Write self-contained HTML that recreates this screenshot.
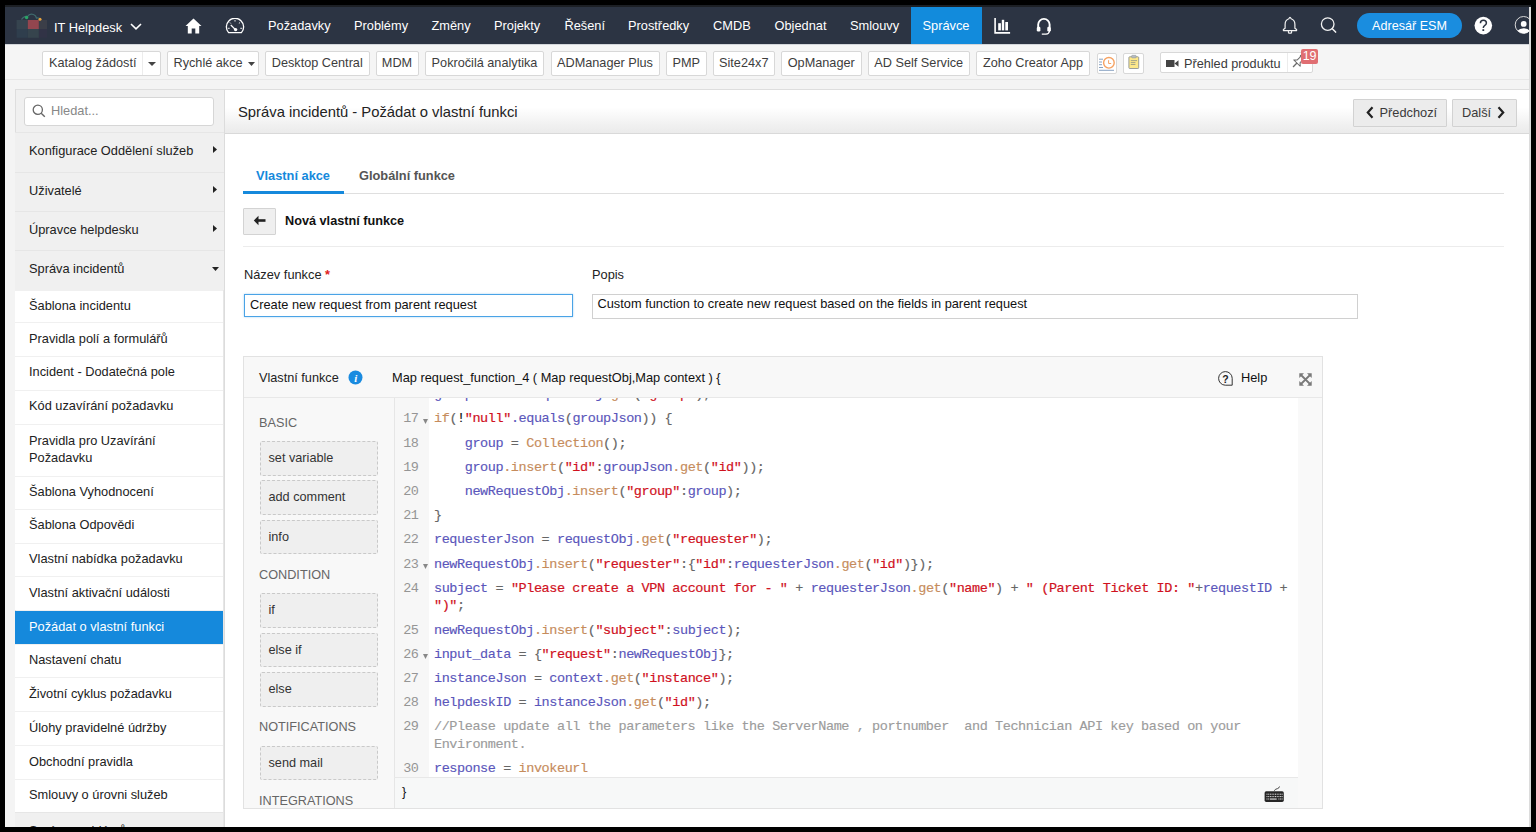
<!DOCTYPE html>
<html><head><meta charset="utf-8">
<style>
*{box-sizing:border-box;margin:0;padding:0}
html,body{width:1536px;height:832px;overflow:hidden;background:#000;font-family:"Liberation Sans",sans-serif;color:#222}
.a{position:absolute;white-space:nowrap}
#frame{position:absolute;left:5px;top:5px;width:1526px;height:822px;background:#f4f4f4;overflow:hidden}
.nv{position:absolute;top:7px;height:37px;line-height:37px;color:#fff;font-size:12.8px;white-space:nowrap}
.tb{position:absolute;top:51px;height:25px;background:#fff;border:1px solid #d8d8d8;border-radius:2px;font-size:12.7px;color:#3d3d3d;line-height:23px;padding:0 6px;white-space:nowrap}
.sr{position:absolute;left:15px;width:209px;font-size:12.8px;color:#222;white-space:nowrap}
.sm{background:#f0f0f0;border-top:1px solid #e6e6e6;padding-left:14px}
.ss{background:#fff;border-top:1px solid #f0f0f0;padding-left:14px}
.code{font-family:"Liberation Mono",monospace;font-size:12.8px}
</style></head><body>
<div id="frame"></div>
<!-- top strip -->
<div class="a" style="left:5px;top:5px;width:1526px;height:2px;background:#1c1f24"></div>
<!-- NAV -->
<div class="a" style="left:5px;top:7px;width:1526px;height:37px;background:#2c3443"></div>
<!-- logo -->
<svg class="a" style="left:16px;top:13px" width="32" height="26" viewBox="0 0 32 26">
 <rect x="0.6" y="7" width="11.2" height="9" fill="#36444f"/>
 <rect x="11.8" y="7" width="11.1" height="9" fill="#93464f"/>
 <rect x="22.9" y="7" width="8.1" height="9" fill="#3b3e48"/>
 <rect x="0.6" y="16" width="11.2" height="8.8" fill="#2f3e4d"/>
 <rect x="11.8" y="16" width="11.1" height="8.8" fill="#36444d"/>
 <rect x="22.9" y="16" width="8.1" height="8.8" fill="#313346"/>
 <path d="M5.5 6.5 Q8 2.5 11.5 3.5 Q13.5 0.2 17.5 1.5 Q20 2.5 20.5 5 Q23 4.5 24.5 6.5" stroke="#3f6a6c" stroke-width="1.3" fill="none"/>
 <circle cx="10.6" cy="4.5" r="1.7" fill="#2aa566"/>
 <circle cx="24" cy="6.2" r="1.5" fill="#e7a23f"/>
</svg>
<div class="nv" style="left:54px;top:8.5px">IT Helpdesk</div>
<svg class="a" style="left:130px;top:23px" width="12" height="7" viewBox="0 0 12 7"><path d="M1 1 L6 5.8 L11 1" stroke="#fff" stroke-width="1.6" fill="none"/></svg>
<!-- home -->
<svg class="a" style="left:185px;top:18px" width="17" height="16" viewBox="0 0 17 16"><path d="M8.5 0.5 L16.5 8 L14.2 8 L14.2 15.5 L10.3 15.5 L10.3 10.5 L6.7 10.5 L6.7 15.5 L2.8 15.5 L2.8 8 L0.5 8 Z" fill="#fff"/></svg>
<!-- dashboard -->
<svg class="a" style="left:225px;top:18px" width="20" height="16" viewBox="0 0 20 16"><path d="M3.6 14.6 A8.6 8.6 0 1 1 16.4 14.6 Z" stroke="#fff" stroke-width="1.3" fill="none" stroke-linejoin="round"/><path d="M5.8 7 L10.4 11.6" stroke="#fff" stroke-width="1.2"/><circle cx="10.6" cy="11.6" r="1.7" fill="#fff"/><path d="M10 2 v1.6 M3 10.3 h1.7 M15.3 10.3 h1.7 M4.9 4.5 l0.9 1 M15 4.6 l-1.1 0.7" stroke="#fff" stroke-width="0.9"/></svg>
<div class="nv" style="left:268px">Požadavky</div>
<div class="nv" style="left:354px">Problémy</div>
<div class="nv" style="left:431.5px">Změny</div>
<div class="nv" style="left:494px">Projekty</div>
<div class="nv" style="left:564.5px">Řešení</div>
<div class="nv" style="left:628px">Prostředky</div>
<div class="nv" style="left:713px">CMDB</div>
<div class="nv" style="left:774.5px">Objednat</div>
<div class="nv" style="left:850px">Smlouvy</div>
<div class="a" style="left:911px;top:7px;width:71px;height:37px;background:#128bdc"></div>
<div class="nv" style="left:922.5px">Správce</div>
<!-- bar chart -->
<svg class="a" style="left:992px;top:16px" width="20" height="20" viewBox="992 16 20 20"><path d="M995.1 18 V32.9 H1010.1" stroke="#fff" stroke-width="1.6" fill="none"/><rect x="998.2" y="23.2" width="2.7" height="7.2" fill="#fff"/><rect x="1001.8" y="19.8" width="2.4" height="10.6" fill="#fff"/><rect x="1005.3" y="22" width="2.7" height="8.4" fill="#fff"/></svg>
<!-- headset -->
<svg class="a" style="left:1034px;top:15px" width="20" height="22" viewBox="1034 15 20 22"><path d="M1038.2 27 V24.6 A5.7 5.7 0 0 1 1049.6 24.6 V27" stroke="#fff" stroke-width="1.9" fill="none"/><rect x="1036.8" y="26.8" width="3.6" height="4.8" rx="1.3" fill="#fff"/><rect x="1047.3" y="26.8" width="3.6" height="4.8" rx="1.3" fill="#fff"/><path d="M1049.5 31 Q1049 34 1046 34.2 H1041.8" stroke="#fff" stroke-width="1.3" fill="none"/></svg>
<!-- bell -->
<svg class="a" style="left:1280px;top:14px" width="20" height="21" viewBox="1280 14 20 21"><path d="M1288.9 18.7 Q1290 16.2 1291.1 18.7 C1293.9 19.6 1294.9 21.8 1294.9 24.4 V28.2 L1296.6 29.4 V30.6 H1283.4 V29.4 L1285.1 28.2 V24.4 C1285.1 21.8 1286.1 19.6 1288.9 18.7 Z" stroke="#f2f2f2" stroke-width="1.2" fill="none" stroke-linejoin="round"/><path d="M1288.4 30.8 V32.4 Q1288.4 33.1 1289.2 33.1 H1290.8 Q1291.6 33.1 1291.6 32.4 V30.8" stroke="#f2f2f2" stroke-width="1.1" fill="none"/></svg>
<!-- search -->
<svg class="a" style="left:1318px;top:14px" width="22" height="22" viewBox="1318 14 22 22"><circle cx="1327.7" cy="24.1" r="6.3" stroke="#f2f2f2" stroke-width="1.3" fill="none"/><path d="M1332.3 28.7 L1335.6 32.1" stroke="#f2f2f2" stroke-width="1.5" stroke-linecap="round"/></svg>
<div class="a" style="left:1357px;top:13px;width:105px;height:25px;border-radius:13px;background:#1a8ddf"></div>
<div class="a" style="left:1357px;top:13px;width:105px;height:25px;line-height:26.5px;text-align:center;color:#fff;font-size:12.6px">Adresář ESM</div>
<svg class="a" style="left:1474px;top:15.5px" width="19" height="19" viewBox="0 0 19 19"><circle cx="9.3" cy="9.6" r="8.8" fill="#fff"/><path d="M6.4 7.2 Q6.4 4.2 9.4 4.2 Q12.4 4.2 12.4 7 Q12.4 8.6 10.6 9.6 Q9.3 10.4 9.3 12" stroke="#2c3443" stroke-width="1.5" fill="none"/><rect x="8.4" y="13.2" width="1.8" height="1.8" fill="#2c3443"/></svg>
<svg class="a" style="left:1514px;top:15px" width="18" height="20" viewBox="1514 15 18 20"><circle cx="1523.6" cy="24.9" r="8.4" stroke="#d8d8d8" stroke-width="1" fill="none"/><circle cx="1523.7" cy="23.9" r="2.9" fill="#fff"/><path d="M1517.6 30.8 Q1519.5 28.3 1523.7 28.3 Q1527.9 28.3 1529.8 30.8 A8.4 8.4 0 0 1 1517.6 30.8 Z" fill="#fff"/></svg>
<!-- TOOLBAR -->
<div class="a" style="left:5px;top:44px;width:1524px;height:1px;background:#d3d6da;z-index:1"></div>
<div class="a" style="left:5px;top:44px;width:1524px;height:36px;background:#f5f5f5;border-bottom:1px solid #e7e7e7"></div>
<div class="tb" style="left:42px;width:119px;padding:0 0 0 6px">Katalog žádostí<span style="position:absolute;left:99px;top:0;width:1px;height:23px;background:#ececec"></span><svg style="position:absolute;left:105px;top:10px" width="8" height="4" viewBox="0 0 8 4"><path d="M0 0 H8 L4 4Z" fill="#444"/></svg></div>
<div class="tb" style="left:166.5px;width:92.5px;padding:0 0 0 6px">Rychlé akce<svg style="position:absolute;left:80px;top:10px" width="7" height="4" viewBox="0 0 7 4"><path d="M0 0 H7 L3.5 4Z" fill="#444"/></svg></div>
<div class="tb" style="left:265px;width:104.5px;text-align:center;padding:0">Desktop Central</div>
<div class="tb" style="left:375.5px;width:43.0px;text-align:center;padding:0">MDM</div>
<div class="tb" style="left:425px;width:119px;text-align:center;padding:0">Pokročilá analytika</div>
<div class="tb" style="left:550.5px;width:109.0px;text-align:center;padding:0">ADManager Plus</div>
<div class="tb" style="left:666px;width:40.5px;text-align:center;padding:0">PMP</div>
<div class="tb" style="left:712.5px;width:62.5px;text-align:center;padding:0">Site24x7</div>
<div class="tb" style="left:781px;width:80.5px;text-align:center;padding:0">OpManager</div>
<div class="tb" style="left:867.5px;width:102.5px;text-align:center;padding:0">AD Self Service</div>
<div class="tb" style="left:976px;width:114px;text-align:center;padding:0">Zoho Creator App</div>
<div class="tb" style="left:1096.5px;top:53px;width:20.5px;height:21px;padding:0"></div>
<svg class="a" style="left:1096px;top:53px" width="22" height="22" viewBox="1096 53 22 22"><path d="M1099 59.2 H1103 M1099 62 H1102 M1099 64.7 H1102 M1099 67.5 H1103 M1099 70.3 H1114" stroke="#88a2c2" stroke-width="1"/><circle cx="1108.9" cy="62.8" r="5.3" stroke="#f6a262" stroke-width="1.4" fill="#fff"/><path d="M1108.6 60.2 V63.5 H1111.2" stroke="#f6a262" stroke-width="1" fill="none"/></svg>
<div class="tb" style="left:1123px;top:53px;width:21px;height:21px;padding:0"></div>
<svg class="a" style="left:1123px;top:53px" width="21" height="21" viewBox="1123 53 21 21"><rect x="1128.9" y="56.8" width="9.8" height="11.7" rx="0.8" fill="#fde88a" stroke="#8e9494" stroke-width="0.9"/><rect x="1131.6" y="55.3" width="4.6" height="2.6" rx="0.8" fill="#b8bcc0" stroke="#8e9494" stroke-width="0.5"/><path d="M1130.8 60.6 H1137 M1130.8 62.6 H1135.4 M1130.8 64.5 H1135.4" stroke="#8e9488" stroke-width="0.8"/></svg>
<div class="tb" style="left:1159.5px;top:52px;width:153px;height:21px;line-height:22.5px;padding:0 0 0 23.5px;font-size:12.7px;color:#3a3a3a">Přehled produktu<svg style="position:absolute;left:5px;top:7px" width="13" height="7" viewBox="0 0 13 7"><rect x="0" y="0" width="8.5" height="7" fill="#444"/><path d="M8.5 3.5 L12.5 0.3 V6.7Z" fill="#444"/></svg><span style="position:absolute;left:126.5px;top:0;width:1px;height:19px;background:#ececec"></span></div>
<svg class="a" style="left:1290px;top:54px" width="16" height="17" viewBox="0 0 16 17"><g transform="rotate(45 8 8)"><path d="M5 1.5 H11 L10 3 V7 L12.5 9.5 H3.5 L6 7 V3 Z" stroke="#6a6a6a" stroke-width="1" fill="#fff" stroke-linejoin="round"/><path d="M8 9.5 V15" stroke="#6a6a6a" stroke-width="1.3"/></g></svg>
<div class="a" style="left:1301px;top:48.5px;width:17px;height:15.5px;background:#e06e72;border-radius:2px;color:#fff;font-family:'Liberation Sans',sans-serif;font-size:12.5px;line-height:15.5px;text-align:center;letter-spacing:-0.3px">19</div>
<!-- SIDEBAR -->
<div class="a" style="left:15px;top:89px;width:209px;height:738px;background:#f0f0f0;border-left:1px solid #dedede;border-top:1px solid #dedede"></div>
<div class="a" style="left:24px;top:97px;width:189.5px;height:28.5px;background:#fff;border:1px solid #d6d6d6;border-radius:3px"></div>
<svg class="a" style="left:32px;top:104px" width="14" height="14" viewBox="0 0 14 14"><circle cx="5.8" cy="5.8" r="4.6" stroke="#666" stroke-width="1.3" fill="none"/><path d="M9.2 9.2 L12.8 12.8" stroke="#666" stroke-width="1.4"/></svg>
<div class="a" style="left:51px;top:97px;height:28.5px;line-height:28.5px;font-size:12.8px;color:#888">Hledat...</div>
<div class="sr sm" style="top:132px;height:40px;line-height:36.0px">Konfigurace Oddělení služeb</div>
<svg class="a" style="left:213px;top:146.25px" width="4" height="7" viewBox="0 0 4 7"><path d="M0 0 L4 3.5 L0 7Z" fill="#222"/></svg>
<div class="sr sm" style="top:172px;height:39px;line-height:35.8px">Uživatelé</div>
<svg class="a" style="left:213px;top:185.65px" width="4" height="7" viewBox="0 0 4 7"><path d="M0 0 L4 3.5 L0 7Z" fill="#222"/></svg>
<div class="sr sm" style="top:211px;height:39px;line-height:35.9px">Úpravce helpdesku</div>
<svg class="a" style="left:213px;top:225.0px" width="4" height="7" viewBox="0 0 4 7"><path d="M0 0 L4 3.5 L0 7Z" fill="#222"/></svg>
<div class="sr sm" style="top:250px;height:40px;line-height:36.3px">Správa incidentů</div>
<svg class="a" style="left:212px;top:266.6px" width="7" height="4" viewBox="0 0 7 4"><path d="M0 0 H7 L3.5 4Z" fill="#222"/></svg>
<div class="sr ss" style="top:290px;height:32px;line-height:29.4px">Šablona incidentu</div>
<div class="sr ss" style="top:322px;height:34px;line-height:31.1px">Pravidla polí a formulářů</div>
<div class="sr ss" style="top:356px;height:34px;line-height:30.5px">Incident - Dodatečná pole</div>
<div class="sr ss" style="top:390px;height:34px;line-height:30.6px">Kód uzavírání požadavku</div>
<div class="sr ss" style="top:424px;height:52px;line-height:17.5px;padding-top:6.5px;white-space:normal">Pravidla pro Uzavírání<br>Požadavku</div>
<div class="sr ss" style="top:476px;height:33px;line-height:30.8px">Šablona Vyhodnocení</div>
<div class="sr ss" style="top:509px;height:34px;line-height:30.7px">Šablona Odpovědi</div>
<div class="sr ss" style="top:543px;height:33px;line-height:30.5px">Vlastní nabídka požadavku</div>
<div class="sr ss" style="top:576px;height:34px;line-height:31.0px">Vlastní aktivační události</div>
<div class="sr ss" style="top:611px;height:33px;line-height:32px;background:#1589dc;color:#fff;border-top:none">Požádat o vlastní funkci</div>
<div class="sr ss" style="top:644px;height:33px;line-height:30.5px">Nastavení chatu</div>
<div class="sr ss" style="top:677px;height:34px;line-height:31.0px">Životní cyklus požadavku</div>
<div class="sr ss" style="top:711px;height:34px;line-height:31.0px">Úlohy pravidelné údržby</div>
<div class="sr ss" style="top:745px;height:34px;line-height:31.0px">Obchodní pravidla</div>
<div class="sr ss" style="top:779px;height:33px;line-height:30.5px">Smlouvy o úrovni služeb</div>
<div class="sr sm" style="top:812px;height:30px;line-height:36px;color:#222">Správa problémů</div>
<div class="a" style="left:223px;top:290px;width:1px;height:537px;background:#e6e6e6"></div>
<!-- MAIN -->
<div class="a" style="left:224px;top:89px;width:1306px;height:738px;background:#fff;border-left:1px solid #dcdcdc;border-top:1px solid #dedede"></div>
<div class="a" style="left:225px;top:90px;width:1304px;height:43.5px;background:linear-gradient(#fff 0%,#fff 40%,#f9f9f9 58%,#f1f1f1 80%,#ebebeb 100%);border-bottom:1px solid #d9d9d9"></div>
<div class="a" style="left:238px;top:91px;height:43px;line-height:43px;font-size:14.8px;color:#222">Správa incidentů - Požádat o vlastní funkci</div>
<div class="a" style="left:1353px;top:99px;width:94px;height:27.5px;background:#ececec;border:1px solid #d2d2d2;border-radius:1px;font-size:12.8px;line-height:26px;color:#3a3a3a;padding-left:25.5px">Předchozí</div>
<svg class="a" style="left:1366px;top:106px" width="8" height="13" viewBox="0 0 8 13"><path d="M6.5 1.2 L1.8 6.5 L6.5 11.8" stroke="#222" stroke-width="2.2" fill="none"/></svg>
<div class="a" style="left:1452px;top:99px;width:65px;height:27.5px;background:#ececec;border:1px solid #d2d2d2;border-radius:1px;font-size:12.8px;line-height:26px;color:#3a3a3a;padding-left:9px">Další</div>
<svg class="a" style="left:1497px;top:106px" width="8" height="13" viewBox="0 0 8 13"><path d="M1.5 1.2 L6.2 6.5 L1.5 11.8" stroke="#222" stroke-width="2.2" fill="none"/></svg>
<!-- tabs -->
<div class="a" style="left:243px;top:193px;width:1261px;height:1px;background:#dfdfdf"></div>
<div class="a" style="left:243px;top:191px;width:101px;height:3px;background:#1589dc"></div>
<div class="a" style="left:256px;top:165px;line-height:21px;font-size:12.8px;font-weight:bold;color:#1589dc">Vlastní akce</div>
<div class="a" style="left:359px;top:165px;line-height:21px;font-size:12.8px;font-weight:bold;color:#555">Globální funkce</div>
<div class="a" style="left:243px;top:207.5px;width:32.5px;height:27px;background:#efefef;border:1px solid #d3d3d3;border-radius:1px"></div>
<svg class="a" style="left:253px;top:215px" width="13" height="11" viewBox="0 0 13 11"><path d="M5.5 0.8 L0.8 5.5 L5.5 10.2 Z" fill="#222"/><rect x="4.5" y="4.2" width="8" height="2.6" fill="#222"/></svg>
<div class="a" style="left:285px;top:211px;line-height:21px;font-size:12.7px;font-weight:bold;color:#111">Nová vlastní funkce</div>
<div class="a" style="left:243px;top:246px;width:1261px;height:1px;background:#ececec"></div>
<!-- form -->
<div class="a" style="left:244px;top:265px;line-height:20px;font-size:12.8px;color:#222">Název funkce <span style="color:#e02020;font-weight:bold">*</span></div>
<div class="a" style="left:592px;top:265px;line-height:20px;font-size:12.8px;color:#222">Popis</div>
<div class="a" style="left:244px;top:294px;width:329px;height:23px;border:1px solid #4aa3e6;box-shadow:0 0 2px #a8d2f2;font-size:12.8px;line-height:20px;padding-left:5px;color:#111">Create new request from parent request</div>
<div class="a" style="left:592px;top:294px;width:766px;height:25px;border:1px solid #d0d0d0;font-size:12.8px;line-height:18.5px;padding-left:4.5px;color:#111">Custom function to create new request based on the fields in parent request</div>
<!-- EDITOR -->
<style>
.v{font-style:normal;color:#5a56bb}
.s{font-style:normal;color:#d0111e;-webkit-text-stroke:0.2px #d0111e}
.m{font-style:normal;color:#c68c5c}
.p{font-style:normal;color:#666}
.k{font-style:normal;color:#111}
.c{font-style:normal;color:#9c9c9c}
.ln{position:absolute;left:395px;width:23.5px;text-align:right;font-family:"Liberation Mono",monospace;font-size:13.5px;letter-spacing:-0.42px;color:#959595;line-height:17.45px;padding-top:3.4px}
.cl{position:absolute;left:434px;font-family:"Liberation Mono",monospace;font-size:13.5px;letter-spacing:-0.416px;line-height:17.45px;padding-top:3.4px;white-space:pre;color:#666;-webkit-text-stroke:0.15px}
.blk{position:absolute;left:260px;width:118px;background:#efefef;border:1px dashed #c9c9c9;border-radius:2px;font-size:12.7px;color:#333;padding-left:7.5px;white-space:nowrap}
</style>
<div class="a" style="left:243px;top:356px;width:1080px;height:453px;background:#f8f8f8;border:1px solid #e2e2e2"></div>
<div class="a" style="left:244px;top:397px;width:1078px;height:1px;background:#e8e8e8"></div>
<div class="a" style="left:259px;top:368px;line-height:20px;font-size:12.7px;color:#222">Vlastní funkce</div>
<svg class="a" style="left:347.5px;top:370px" width="15" height="15" viewBox="0 0 15 15"><circle cx="7.5" cy="7.5" r="7" fill="#1a8be0"/><text x="7.8" y="12" font-family="Liberation Serif" font-style="italic" font-weight="bold" font-size="11" fill="#fff" text-anchor="middle">i</text></svg>
<div class="a" style="left:392px;top:368px;line-height:20px;font-size:12.8px;color:#111">Map request_function_4 ( Map requestObj,Map context ) {</div>
<svg class="a" style="left:1218px;top:370.5px" width="15" height="15" viewBox="0 0 15 15"><path d="M7.3 14.2 A6.8 6.8 0 1 1 14.2 7.3 V14.2 Z" stroke="#333" stroke-width="1" fill="none"/><text x="7.5" y="12" font-family="Liberation Sans" font-weight="bold" font-size="10.5" fill="#222" text-anchor="middle">?</text></svg>
<div class="a" style="left:1241px;top:368px;line-height:20px;font-size:12.8px;color:#111">Help</div>
<svg class="a" style="left:1299px;top:372.5px" width="13" height="13" viewBox="0 0 13 13"><path d="M0.3 0.3 H5 L0.3 5Z M12.7 0.3 H8 L12.7 5Z M0.3 12.7 H5 L0.3 8Z M12.7 12.7 H8 L12.7 8Z" fill="#7a7a7a"/><path d="M1.5 1.5 L11.5 11.5 M11.5 1.5 L1.5 11.5" stroke="#7a7a7a" stroke-width="1.8"/></svg>
<!-- code area -->
<div class="a" style="left:394px;top:398px;width:904px;height:379px;background:#fff;border-left:1px solid #e6e6e6;overflow:hidden"></div>
<div class="a" style="left:395px;top:398px;width:34px;height:379px;background:#f7f7f7"></div>
<div class="a" style="left:1298px;top:398px;width:24px;height:410px;background:#f9f9f9;z-index:2"></div>
<div class="a" style="left:394px;top:398px;width:904px;height:379px;overflow:hidden">
<div style="position:absolute;left:-394px;top:-398px;width:1536px;height:832px">
<div class="ln" style="top:382.78px">16</div><div class="cl" style="top:382.78px"><i class="v">groupJson</i><i class="p"> = </i><i class="v">requestObj</i><i class="m">.get</i><i class="p">(</i><i class="s">&quot;group&quot;</i><i class="p">);</i></div>
<div class="ln" style="top:407.00px">17</div><svg class="a" style="left:423px;top:418.50px" width="5" height="5" viewBox="0 0 5 5"><path d="M0 0 H5 L2.5 5Z" fill="#888"/></svg><div class="cl" style="top:407.00px"><i class="m">if</i><i class="p">(</i><i class="k">!</i><i class="s">&quot;null&quot;</i><i class="v">.equals</i><i class="p">(</i><i class="v">groupJson</i><i class="p">)) {</i></div>
<div class="ln" style="top:431.22px">18</div><div class="cl" style="top:431.22px">    <i class="v">group</i><i class="p"> = </i><i class="m">Collection</i><i class="p">();</i></div>
<div class="ln" style="top:455.44px">19</div><div class="cl" style="top:455.44px">    <i class="v">group</i><i class="m">.insert</i><i class="p">(</i><i class="s">&quot;id&quot;</i><i class="p">:</i><i class="v">groupJson</i><i class="m">.get</i><i class="p">(</i><i class="s">&quot;id&quot;</i><i class="p">));</i></div>
<div class="ln" style="top:479.66px">20</div><div class="cl" style="top:479.66px">    <i class="v">newRequestObj</i><i class="m">.insert</i><i class="p">(</i><i class="s">&quot;group&quot;</i><i class="p">:</i><i class="v">group</i><i class="p">);</i></div>
<div class="ln" style="top:503.88px">21</div><div class="cl" style="top:503.88px"><i class="p">}</i></div>
<div class="ln" style="top:528.10px">22</div><div class="cl" style="top:528.10px"><i class="v">requesterJson</i><i class="p"> = </i><i class="v">requestObj</i><i class="m">.get</i><i class="p">(</i><i class="s">&quot;requester&quot;</i><i class="p">);</i></div>
<div class="ln" style="top:552.32px">23</div><svg class="a" style="left:423px;top:563.82px" width="5" height="5" viewBox="0 0 5 5"><path d="M0 0 H5 L2.5 5Z" fill="#888"/></svg><div class="cl" style="top:552.32px"><i class="v">newRequestObj</i><i class="m">.insert</i><i class="p">(</i><i class="s">&quot;requester&quot;</i><i class="p">:{</i><i class="s">&quot;id&quot;</i><i class="p">:</i><i class="v">requesterJson</i><i class="m">.get</i><i class="p">(</i><i class="s">&quot;id&quot;</i><i class="p">)});</i></div>
<div class="ln" style="top:576.54px">24</div><div class="cl" style="top:576.54px"><i class="v">subject</i><i class="p"> = </i><i class="s">&quot;Please create a VPN account for - &quot;</i><i class="p"> + </i><i class="v">requesterJson</i><i class="m">.get</i><i class="p">(</i><i class="s">&quot;name&quot;</i><i class="p">) + </i><i class="s">&quot; (Parent Ticket ID: &quot;</i><i class="p">+</i><i class="v">requestID</i><i class="p"> +</i><br><i class="s">&quot;)&quot;</i><i class="p">;</i></div>
<div class="ln" style="top:618.21px">25</div><div class="cl" style="top:618.21px"><i class="v">newRequestObj</i><i class="m">.insert</i><i class="p">(</i><i class="s">&quot;subject&quot;</i><i class="p">:</i><i class="v">subject</i><i class="p">);</i></div>
<div class="ln" style="top:642.43px">26</div><svg class="a" style="left:423px;top:653.93px" width="5" height="5" viewBox="0 0 5 5"><path d="M0 0 H5 L2.5 5Z" fill="#888"/></svg><div class="cl" style="top:642.43px"><i class="v">input_data</i><i class="p"> = {</i><i class="s">&quot;request&quot;</i><i class="p">:</i><i class="v">newRequestObj</i><i class="p">};</i></div>
<div class="ln" style="top:666.65px">27</div><div class="cl" style="top:666.65px"><i class="v">instanceJson</i><i class="p"> = </i><i class="v">context</i><i class="m">.get</i><i class="p">(</i><i class="s">&quot;instance&quot;</i><i class="p">);</i></div>
<div class="ln" style="top:690.87px">28</div><div class="cl" style="top:690.87px"><i class="v">helpdeskID</i><i class="p"> = </i><i class="v">instanceJson</i><i class="m">.get</i><i class="p">(</i><i class="s">&quot;id&quot;</i><i class="p">);</i></div>
<div class="ln" style="top:715.09px">29</div><div class="cl" style="top:715.09px"><i class="c">//Please update all the parameters like the ServerName , portnumber  and Technician API key based on your<br>Environment.</i></div>
<div class="ln" style="top:756.76px">30</div><div class="cl" style="top:756.76px"><i class="v">response</i><i class="p"> = </i><i class="m">invokeurl</i></div>
</div></div>
<div class="a" style="left:394px;top:777px;width:904px;height:1px;background:#e8e8e8"></div>
<div class="a" style="left:394px;top:778px;width:904px;height:30px;background:#f7f8f8;border-left:1px solid #e6e6e6"></div>
<div class="a" style="left:402px;top:782px;line-height:20px;font-size:12.8px;color:#111">}</div>
<svg class="a" style="left:1262px;top:784px" width="24" height="20" viewBox="1262 784 24 20"><path d="M1274.3 790.8 Q1275 789 1277.5 788.6 Q1279.3 788 1279.5 786.5" stroke="#333" stroke-width="0.9" fill="none"/><rect x="1264.6" y="791.3" width="19.2" height="10.6" rx="1.6" fill="#262626"/><rect x="1266.5" y="793.7" width="1" height="1" fill="#e8e8e8"/><rect x="1268.2" y="793.7" width="1" height="1" fill="#e8e8e8"/><rect x="1269.9" y="793.7" width="1" height="1" fill="#e8e8e8"/><rect x="1271.6" y="793.7" width="1" height="1" fill="#e8e8e8"/><rect x="1273.3" y="793.7" width="1" height="1" fill="#e8e8e8"/><rect x="1275" y="793.7" width="1" height="1" fill="#e8e8e8"/><rect x="1276.7" y="793.7" width="1" height="1" fill="#e8e8e8"/><rect x="1278.4" y="793.7" width="1" height="1" fill="#e8e8e8"/><rect x="1280.1" y="793.7" width="1" height="1" fill="#e8e8e8"/><rect x="1281.6" y="793.7" width="1" height="1" fill="#e8e8e8"/><rect x="1266.5" y="796.1" width="1" height="1" fill="#e8e8e8"/><rect x="1268.2" y="796.1" width="1" height="1" fill="#e8e8e8"/><rect x="1269.9" y="796.1" width="1" height="1" fill="#e8e8e8"/><rect x="1271.6" y="796.1" width="1" height="1" fill="#e8e8e8"/><rect x="1273.3" y="796.1" width="1" height="1" fill="#e8e8e8"/><rect x="1275" y="796.1" width="1" height="1" fill="#e8e8e8"/><rect x="1276.7" y="796.1" width="1" height="1" fill="#e8e8e8"/><rect x="1278.4" y="796.1" width="1" height="1" fill="#e8e8e8"/><rect x="1280.1" y="796.1" width="1" height="1" fill="#e8e8e8"/><rect x="1281.6" y="796.1" width="1" height="1" fill="#e8e8e8"/><rect x="1266.5" y="798.5" width="1" height="1" fill="#e8e8e8"/><rect x="1268.2" y="798.5" width="1" height="1" fill="#e8e8e8"/><rect x="1269.9" y="798.5" width="6.8" height="1.1" fill="#e8e8e8"/><rect x="1278.4" y="798.5" width="1" height="1" fill="#e8e8e8"/><rect x="1280.1" y="798.5" width="1" height="1" fill="#e8e8e8"/><rect x="1281.6" y="798.5" width="1" height="1" fill="#e8e8e8"/></svg>
<div class="a" style="left:259px;top:413.5px;line-height:18px;font-size:12.7px;color:#666">BASIC</div>
<div class="blk" style="top:441px;height:35px;line-height:33px">set variable</div>
<div class="blk" style="top:480px;height:35px;line-height:33px">add comment</div>
<div class="blk" style="top:519.5px;height:34.5px;line-height:32.5px">info</div>
<div class="a" style="left:259px;top:565.6px;line-height:18px;font-size:12.7px;color:#666">CONDITION</div>
<div class="blk" style="top:593px;height:34.5px;line-height:32.5px">if</div>
<div class="blk" style="top:632.5px;height:34.5px;line-height:32.5px">else if</div>
<div class="blk" style="top:672px;height:34.5px;line-height:32.5px">else</div>
<div class="a" style="left:259px;top:718px;line-height:18px;font-size:12.7px;color:#666">NOTIFICATIONS</div>
<div class="blk" style="top:745.5px;height:34.0px;line-height:32.0px">send mail</div>
<div class="a" style="left:259px;top:792.4px;line-height:18px;font-size:12.7px;color:#666">INTEGRATIONS</div>
<!-- /EDITOR -->
<div class="a" style="left:1529px;top:7px;width:2px;height:820px;background:#dcdcdc"></div>
<div class="a" style="left:1531px;top:0;width:5px;height:832px;background:#000"></div>
<div class="a" style="left:0;top:827px;width:1536px;height:5px;background:#000"></div>
<div class="a" style="left:0;top:0;width:1536px;height:5px;background:#000"></div>
<div class="a" style="left:0;top:0;width:5px;height:832px;background:#000"></div>
</body></html>
